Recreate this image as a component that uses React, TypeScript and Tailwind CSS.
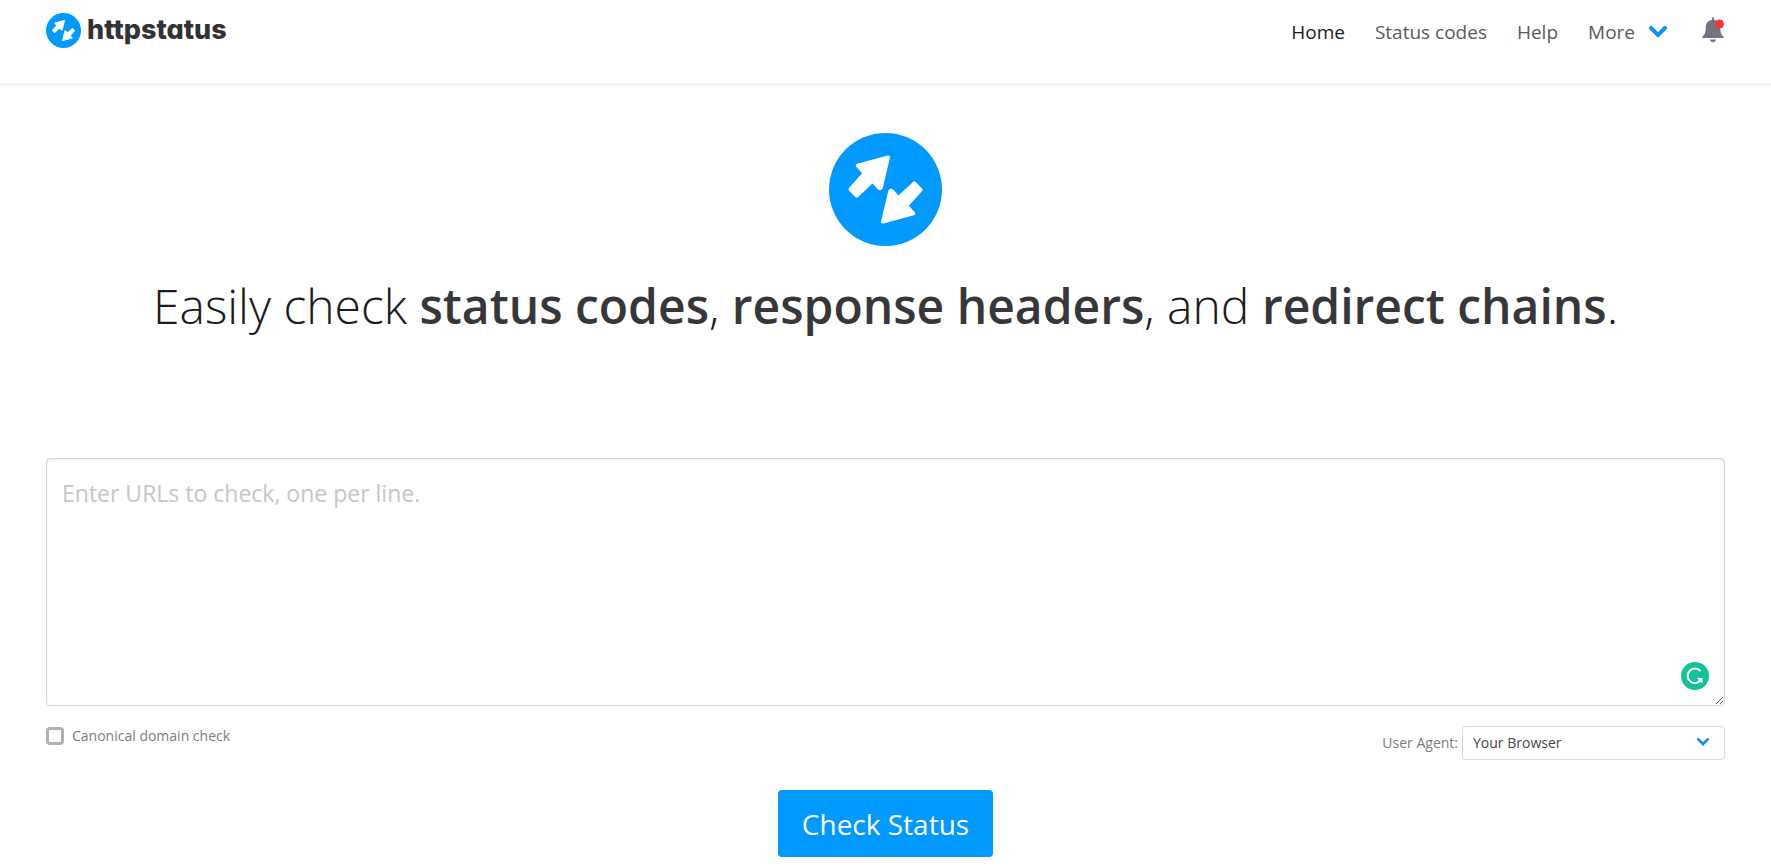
import { useState } from "react";

const navLinks = [
  { label: "Home", href: "#home", active: true },
  { label: "Status codes", href: "#codes", active: false },
  { label: "Help", href: "#help", active: false },
];

const Logo = ({ className }: { className: string }) => {
  const arrow = "M178 73 L86 98 L107 121 L64 169 L83 189 L131 144 L151 166 Q156 168 157 162 Z";

  return (
    <svg viewBox="0 0 340 340" className={className} aria-hidden="true">
      <circle cx="170" cy="170" r="170" fill="#0099ff" />
      <g fill="#fff" stroke="#fff" strokeWidth="11" strokeLinejoin="round">
        <path d={arrow} />
        <path d={arrow} transform="rotate(180 170 170)" />
      </g>
    </svg>
  );
};

const Chevron = ({ className }: { className: string }) => (
  <svg viewBox="0 0 18 12" className={className} fill="none" stroke="#0c92f0" strokeWidth="4" aria-hidden="true">
    <path d="M2 2 L9 9 L16 2" strokeLinejoin="miter" strokeLinecap="round" />
  </svg>
);

const Bell = () => (
  <svg viewBox="0 0 24 26" className="w-6 h-[26px]" aria-hidden="true">
    <path
      d="M11 0.500h2v2.200c4 .8 6.300 3.800 6.300 7.800 0 5 .9 7.200 3.200 9v1.500H1.500v-1.500c2.300-1.800 3.200-4 3.200-9 0-4 2.300-7 6.300-7.800z"
      fill="#71757f"
    />
    <path d="M9 22.500h6c0 1.600-1.300 2.700-3 2.700s-3-1.100-3-2.700z" fill="#71757f" />
    <circle cx="18.500" cy="7" r="4.500" fill="#f8324c" />
  </svg>
);

const Header = () => {
  return (
    <header className="flex items-start justify-between h-[86px] px-[46px] border-b-3 border-[#f5f5f7]">
      <a href="#home" className="flex items-center gap-1.5 mt-3 h-9">
        <Logo className="w-[35px] h-[35px]" />
        <span className="font-[Inter] font-extrabold text-[27px] leading-8 text-[#333] [font-feature-settings:'cv11']">
          httpstatus
        </span>
      </a>
      <nav className="flex items-center gap-[30px] mt-4 h-8 text-[19px] text-[#5a5a5a]">
        {navLinks.map(({ label, href, active }) => (
          <a key={label} href={href} className={active ? "text-[#1a1a1a]" : ""}>
            {label}
          </a>
        ))}
        <button type="button" className="flex items-center gap-3.5 mr-1">
          More <Chevron className="w-[18px] h-3" />
        </button>
        <button type="button" aria-label="Notifications" className="-mt-1">
          <Bell />
        </button>
      </nav>
    </header>
  );
};

const App = () => {
  const [urls, setUrls] = useState("");
  const [canonical, setCanonical] = useState(false);
  const [agent, setAgent] = useState("browser");

  return (
    <div className="bg-white font-['Open_Sans',sans-serif] pb-3">
      <Header />

      <main className="px-[46px]">
        <section className="flex flex-col items-center pt-[47px] text-center">
          <Logo className="w-[113px] h-[113px]" />
          <h1 className="mt-6 font-light text-[48px] leading-[72px] text-[#1c1c1e]">
            Easily check <strong className="font-semibold text-[#37373a]">status codes</strong>,{" "}
            <strong className="font-semibold text-[#37373a]">response headers</strong>, and{" "}
            <strong className="font-semibold text-[#37373a]">redirect chains</strong>.
          </h1>
        </section>

        <form className="mt-[116px]" onSubmit={(e) => e.preventDefault()}>
          <div className="relative">
            <textarea
              aria-label="URLs"
              className="block w-full h-[248px] px-[15px] py-4 border border-[#d3d3d9] rounded-sm outline-none text-[23px] leading-9 placeholder:text-[#c6c6c9] shadow-[inset_0_2px_3px_rgba(0,0,0,0.06)]"
              placeholder="Enter URLs to check, one per line."
              value={urls}
              onChange={(e) => setUrls(e.target.value)}
            />
            <svg viewBox="0 0 28 28" className="absolute right-4 bottom-4 w-7 h-7" aria-hidden="true">
              <circle cx="14" cy="14" r="14" fill="#15c39a" />
              <path d="M19 8.500A7.300 7.300 0 1 0 18.500 19.500" fill="none" stroke="#fff" strokeWidth="2" strokeLinecap="round" />
              <path d="M15.500 16h6v5.500l-2-1.800-2 1-1-1.700 1.500-1.500z" fill="#fff" />
            </svg>
          </div>

          <div className="flex items-start justify-between mt-5 text-[14px] leading-5 text-[#7c7c80]">
            <label className="flex items-center gap-2">
              <input
                type="checkbox"
                className="appearance-none w-[18px] h-[18px] border-3 border-[#b0b0b0] rounded-sm checked:bg-[#0099ff]"
                checked={canonical}
                onChange={(e) => setCanonical(e.target.checked)}
              />
              Canonical domain check
            </label>
            <div className="flex items-center gap-1">
              <label htmlFor="agent">User Agent:</label>
              <div className="relative">
                <select
                  id="agent"
                  className="appearance-none block w-[263px] h-[34px] pl-2.5 border border-[#d8d8de] rounded-sm bg-white text-[#454548]"
                  value={agent}
                  onChange={(e) => setAgent(e.target.value)}
                >
                  <option value="browser">Your Browser</option>
                </select>
                <Chevron className="absolute right-4 top-3 w-3 h-2 pointer-events-none" />
              </div>
            </div>
          </div>

          <div className="flex justify-center mt-[30px]">
            <button type="submit" className="h-[67px] px-6 rounded-sm bg-[#0099ff] text-white text-[28px] cursor-pointer">
              Check Status
            </button>
          </div>
        </form>
      </main>
    </div>
  );
};

export default App;
